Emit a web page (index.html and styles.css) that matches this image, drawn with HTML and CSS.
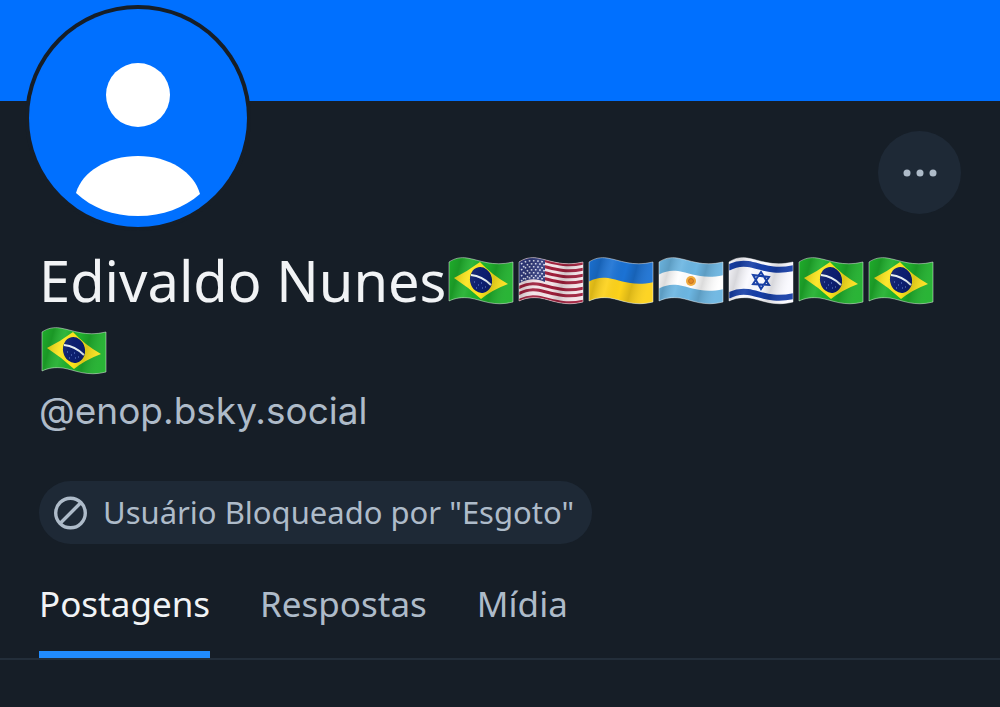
FILE: index.html
```
<!DOCTYPE html>
<html lang="pt-BR">

<head>
  <meta charset="UTF-8">
  <meta name="viewport" content="width=device-width, initial-scale=1.0">
  <title>Edivaldo Nunes</title>
  <link rel="stylesheet" href="styles.css">
</head>

<body>
  <!-- Flag artwork, reused in the display name -->
  <svg class="sprite" width="0" height="0" aria-hidden="true">
    <defs>
      <clipPath id="wave">
        <path d="M1 5C7 1 13 0 19 1C32 3 44 10 65 5V45C46 50 34 43 22 41C14 40 7 41 1 44Z" />
      </clipPath>
      <linearGradient id="shade" x1="0" x2="1" y1="0" y2="0.2">
        <stop offset="0" stop-color="#000" stop-opacity="0" />
        <stop offset="0.2" stop-color="#000" stop-opacity="0.14" />
        <stop offset="0.38" stop-color="#fff" stop-opacity="0.08" />
        <stop offset="0.6" stop-color="#000" stop-opacity="0" />
        <stop offset="0.75" stop-color="#000" stop-opacity="0.14" />
        <stop offset="1" stop-color="#fff" stop-opacity="0.05" />
      </linearGradient>
      <g id="finish">
        <rect width="66" height="49" fill="url(#shade)" clip-path="url(#wave)" />
        <path d="M1 5C7 1 13 0 19 1C32 3 44 10 65 5V45C46 50 34 43 22 41C14 40 7 41 1 44Z" fill="none" stroke="#fff" stroke-opacity="0.45" />
      </g>
      <symbol id="br" viewBox="0 0 66 49">
        <g clip-path="url(#wave)">
          <rect width="66" height="49" fill="#1fb02c" />
          <path d="M6 21Q20 14 32 5Q44 18 60 27Q44 33 33 42Q20 30 6 21Z" fill="#fde51c" />
          <ellipse cx="33" cy="23" rx="11" ry="13" fill="#0c1f70" transform="rotate(-12 33 23)" />
          <path d="M23 18Q34 19 43 28" fill="none" stroke="#e8f1f5" stroke-width="2" />
          <path d="M26 25h1M30 28h1M34 31h1M28 31h1M37 30h1M33 26h1" stroke="#6f8fd8" />
        </g>
        <use href="#finish" />
      </symbol>
      <symbol id="us" viewBox="0 0 66 49">
        <g clip-path="url(#wave)">
          <rect width="66" height="49" fill="#f3e4e8" />
          <g fill="none" stroke="#a01f3c" stroke-width="3">
            <path id="stripe" d="M0 6C7 2 13 1 19 2C32 4 44 11 66 6" />
            <use href="#stripe" y="6" />
            <use href="#stripe" y="12" />
            <use href="#stripe" y="18" />
            <use href="#stripe" y="25" />
            <use href="#stripe" y="31" />
            <use href="#stripe" y="38" />
          </g>
          <path d="M0 0H27V25C18 21 10 21 0 27Z" fill="#303a7c" />
          <g fill="none" stroke="#dfe3f5" stroke-width="1.6" stroke-dasharray="1.6 2.6">
            <path id="stars" d="M3 7C9 3 16 3 26 5" />
            <use href="#stars" x="2" y="3" />
            <use href="#stars" y="6" />
            <use href="#stars" x="2" y="9" />
            <use href="#stars" y="12" />
            <use href="#stars" x="2" y="15" />
            <use href="#stars" y="17" />
          </g>
        </g>
        <use href="#finish" />
      </symbol>
      <symbol id="ua" viewBox="0 0 66 49">
        <g clip-path="url(#wave)">
          <rect width="66" height="49" fill="#1b72d4" />
          <path d="M0 25C7 21 13 20 20 21C33 23 44 30 66 25V49H0Z" fill="#fdd21a" />
        </g>
        <use href="#finish" />
      </symbol>
      <symbol id="ar" viewBox="0 0 66 49">
        <g clip-path="url(#wave)">
          <rect width="66" height="49" fill="#6cb6e2" />
          <path d="M0 18C7 14 13 13 20 14C33 16 44 23 66 18V32C44 37 33 30 20 28C13 27 7 28 0 32Z" fill="#fff" />
          <circle cx="33" cy="24" r="5" fill="#f4ac3c" />
          <circle cx="33" cy="24" r="2.5" fill="#e58a25" stroke="#b8651c" stroke-width="0.7" />
        </g>
        <use href="#finish" />
      </symbol>
      <symbol id="il" viewBox="0 0 66 49">
        <g clip-path="url(#wave)">
          <rect width="66" height="49" fill="#fafaff" />
          <g fill="none" stroke="#173fa8" stroke-width="6">
            <path d="M0 11C7 7 13 6 20 7C33 9 44 16 66 11" />
            <path d="M0 39C7 35 13 34 20 35C33 37 44 44 66 39" />
          </g>
          <path d="M33 15L41 28L25 27ZM33 32L25 18L41 20Z" fill="none" stroke="#173fa8" stroke-width="2" />
        </g>
        <use href="#finish" />
      </symbol>
    </defs>
  </svg>

  <div class="banner"></div>

  <main class="profile">
    <div class="avatar">
      <svg viewBox="0 0 218 218" role="img" aria-label="Avatar">
        <circle cx="109" cy="109" r="109" fill="#0070ff" />
        <circle cx="109" cy="86" r="32" fill="#fff" />
        <path d="M47 184C53 163 78 147 109 147C140 147 165 163 171 185C155 199 134 207 109 207C84 207 63 199 47 184Z" fill="#fff" />
      </svg>
    </div>

    <div class="actions">
      <button class="more" type="button" aria-label="Mais opções">
        <svg viewBox="0 0 34 8" width="34" height="8">
          <circle cx="4" cy="4" r="3.5" />
          <circle cx="17" cy="4" r="3.5" />
          <circle cx="30" cy="4" r="3.5" />
        </svg>
      </button>
    </div>

    <h1 class="name">Edivaldo Nunes<svg class="flag" role="img" aria-label="Brasil"><use href="#br" /></svg><svg class="flag" role="img" aria-label="Estados Unidos"><use href="#us" /></svg><svg class="flag" role="img" aria-label="Ucrânia"><use href="#ua" /></svg><svg class="flag" role="img" aria-label="Argentina"><use href="#ar" /></svg><svg class="flag" role="img" aria-label="Israel"><use href="#il" /></svg><svg class="flag" role="img" aria-label="Brasil"><use href="#br" /></svg><svg class="flag" role="img" aria-label="Brasil"><use href="#br" /></svg><svg class="flag" role="img" aria-label="Brasil"><use href="#br" /></svg></h1>
    <p class="handle">@enop.bsky.social</p>

    <button class="label" type="button">
      <svg viewBox="0 0 34 34" width="34" height="34">
        <circle cx="16.5" cy="17" r="14.8" />
        <path d="M6.500 27L26.500 7" />
      </svg>
      <span>Usuário Bloqueado por "Esgoto"</span>
    </button>
  </main>

  <nav class="tabs">
    <a class="tab active" href="#postagens">Postagens</a>
    <a class="tab" href="#respostas">Respostas</a>
    <a class="tab" href="#midia">Mídia</a>
  </nav>
</body>

</html>
```
FILE: styles.css
```
* {
  box-sizing: border-box;
}

body {
  margin: 0;
  background-color: #161e27;
  color: #f1f3f5;
  font-family: "Noto Sans", sans-serif;
}

.sprite {
  position: absolute;
}

.banner {
  height: 101px;
  background-color: #0070ff;
}

.profile {
  position: relative;
  padding: 30px 39px 0;
}

/* Avatar overlaps the banner */
.avatar {
  position: absolute;
  top: -96px;
  left: 25px;
  width: 226px;
  height: 226px;
  padding: 4px;
  border-radius: 50%;
  background-color: #161e27;
}

.avatar svg {
  display: block;
}

.actions {
  display: flex;
  justify-content: flex-end;
  margin-bottom: 31px;
}

.more {
  display: flex;
  align-items: center;
  justify-content: center;
  width: 83px;
  height: 83px;
  padding: 0;
  border: none;
  border-radius: 50%;
  background-color: #1e2936;
  fill: #aebbc9;
  cursor: pointer;
}

.name {
  margin: 0;
  font-size: 56px;
  font-weight: 400;
  line-height: 70px;
}

.flag {
  width: 66px;
  height: 49px;
  margin: 0 2px;
  vertical-align: -4px;
}

.handle {
  margin: 0;
  color: #aebbc9;
  font-family: Inter, sans-serif;
  font-size: 37px;
  line-height: 52px;
}

.label {
  display: flex;
  align-items: center;
  gap: 15px;
  margin: 44px 0 0;
  padding: 0 18px 0 15px;
  border: none;
  border-radius: 32px;
  background-color: #1e2936;
  color: #aebbc9;
  font-family: inherit;
  font-size: 31px;
  line-height: 63px;
  cursor: pointer;
}

.label svg {
  fill: none;
  stroke: #aebbc9;
  stroke-width: 3.4;
}

.tabs {
  display: flex;
  gap: 50px;
  margin-top: 30px;
  padding: 0 39px;
  border-bottom: 2px solid #232e3a;
}

.tab {
  padding-bottom: 17px;
  border-bottom: 7px solid transparent;
  color: #aebbc9;
  font-size: 35px;
  line-height: 60px;
  text-decoration: none;
}

.tab.active {
  border-bottom-color: #208bfe;
  color: #f1f3f5;
}
```
